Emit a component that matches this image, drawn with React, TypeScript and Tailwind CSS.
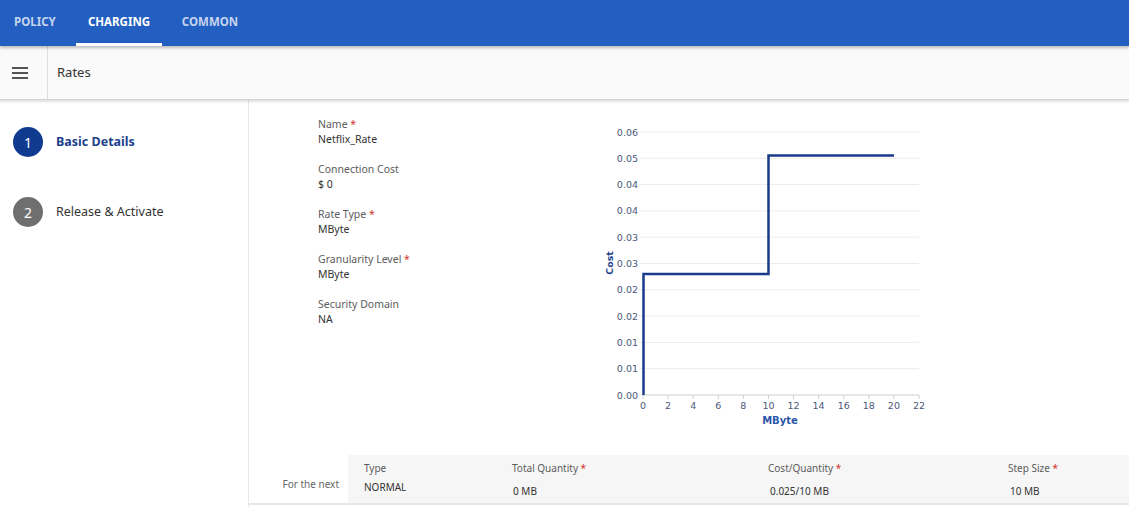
import React from "react";

const yLabels = ["0.06", "0.05", "0.04", "0.04", "0.03", "0.03", "0.02", "0.02", "0.01", "0.01", "0.00"];
const xLabels = ["0", "2", "4", "6", "8", "10", "12", "14", "16", "18", "20", "22"];

function Chart() {
  const x0 = 53;
  const x1 = 329;
  const yTop = 12;
  const yBot = 275;
  const dy = (yBot - yTop) / 10;
  const dx = (x1 - x0) / 11;
  return (
    <svg width="340" height="310" viewBox="0 0 340 310" className="block">
      {yLabels.map((l, i) => {
        const y = yTop + i * dy;
        return (
          <g key={"y" + i}>
            <line x1={x0 - 4} x2={x1} y1={y} y2={y} stroke="#ececec" strokeWidth="1" />
            <text x={48} y={y + 3.5} textAnchor="end" fontSize="9.5" fill="#4a587a" fontFamily="'DejaVu Sans', Verdana, sans-serif">
              {l}
            </text>
          </g>
        );
      })}
      <line x1={x0} x2={x1} y1={yBot} y2={yBot} stroke="#d9d9d9" strokeWidth="1" />
      {xLabels.map((l, i) => {
        const x = x0 + i * dx;
        return (
          <g key={"x" + i}>
            <line x1={x} x2={x} y1={yBot} y2={yBot + 4} stroke="#cfcfcf" strokeWidth="1" />
            <text x={x} y={289} textAnchor="middle" fontSize="9.5" fill="#4a587a" fontFamily="'DejaVu Sans', Verdana, sans-serif">
              {l}
            </text>
          </g>
        );
      })}
      <text x={190} y={304} textAnchor="middle" fontSize="10" fill="#2b55a8" fontWeight="bold" fontFamily="'DejaVu Sans', Verdana, sans-serif">
        MByte
      </text>
      <text
        x={0}
        y={0}
        transform="translate(23 143) rotate(-90)"
        textAnchor="middle"
        fontSize="9.5"
        fill="#1e3f8f"
        fontWeight="bold"
        fontFamily="'DejaVu Sans', Verdana, sans-serif"
      >
        Cost
      </text>
      <path d="M 53.5 275 V 154 H 178.5 V 35.5 H 304" fill="none" stroke="#1a3b8c" strokeWidth="2.5" />
    </svg>
  );
}

function Field({ label, value, req }: { label: string; value: string; req?: boolean }) {
  return (
    <div className="flex flex-col">
      <div className="text-[10.5px] leading-[15px] text-[#5c5c5c]">
        {label}
        {req && <span className="text-[#d0342c]"> *</span>}
      </div>
      <div className="text-[10.5px] leading-[15px] text-[#333]">{value}</div>
    </div>
  );
}

export default function App() {
  return (
    <div
      className="w-[1129px] h-[507px] overflow-hidden bg-white flex flex-col"
      style={{ fontFamily: "'Noto Sans', 'Open Sans', sans-serif" }}
    >
      <div className="h-[46px] bg-[#225fc0] flex items-stretch shrink-0 relative z-20 shadow-[0_2px_3px_rgba(0,0,0,0.25)]">
        <div className="w-[76px] flex items-center pl-[14px] text-[11.5px] font-bold text-[#c6d4ef] pb-[2px]">POLICY</div>
        <div className="w-[86px] flex items-center justify-center text-[11.5px] font-bold text-white border-b-[3px] border-white pt-[1px]">
          CHARGING
        </div>
        <div className="w-[96px] flex items-center justify-center text-[11.5px] font-bold text-[#c6d4ef] pb-[2px]">COMMON</div>
      </div>
      <div className="h-[54px] bg-[#fafafa] flex items-stretch shrink-0 relative z-10 border-b border-[#d4d4d4] shadow-[0_2px_2px_rgba(0,0,0,0.12)]">
        <div className="w-[48px] border-r border-[#dedede] flex items-center pl-[12px]">
          <svg width="16" height="12" viewBox="0 0 16 12">
            <rect x="0" y="0" width="16" height="2" fill="#555" />
            <rect x="0" y="5" width="16" height="2" fill="#555" />
            <rect x="0" y="10" width="16" height="2" fill="#555" />
          </svg>
        </div>
        <div className="flex items-center pl-[9px] text-[13px] text-[#333]">Rates</div>
      </div>
      <div className="flex flex-1 min-h-0">
        <div className="w-[249px] shrink-0 border-r border-[#e8e8e8] pt-[27px] pl-[13px] flex flex-col gap-[40px]">
          <div className="flex items-center gap-[13px]">
            <div className="w-[30px] h-[30px] rounded-full bg-[#0f3a8e] text-white text-[14px] flex items-center justify-center">1</div>
            <div className="text-[12.5px] font-bold text-[#1d3f8c]">Basic Details</div>
          </div>
          <div className="flex items-center gap-[13px]">
            <div className="w-[30px] h-[30px] rounded-full bg-[#6f6f6f] text-white text-[14px] flex items-center justify-center">2</div>
            <div className="text-[12.5px] text-[#333]">Release &amp; Activate</div>
          </div>
        </div>
        <div className="flex-1 flex flex-col">
          <div className="flex h-[355px]">
            <div className="w-[341px] pl-[69px] pt-[17px] flex flex-col gap-[15px]">
              <Field label="Name" value="Netflix_Rate" req />
              <Field label="Connection Cost" value="$ 0" />
              <Field label="Rate Type" value="MByte" req />
              <Field label="Granularity Level" value="MByte" req />
              <Field label="Security Domain" value="NA" />
            </div>
            <div className="pt-[20px]">
              <Chart />
            </div>
          </div>
          <div className="flex h-[50px] border-b-2 border-[#e6e6e6]">
            <div className="w-[99px] flex items-end justify-end pr-[9px] pb-[11px] text-[10px] text-[#666]">For the next</div>
            <div className="flex-1 bg-[#f6f6f6] grid grid-cols-[148px_256px_240px_1fr] pl-[16px] pt-[6px] text-[10px]">
              <div className="flex flex-col">
                <div className="text-[#5c5c5c] leading-[14px]">Type</div>
                <div className="text-[#333] leading-[14px] mt-[5px]">NORMAL</div>
              </div>
              <div className="flex flex-col">
                <div className="text-[#5c5c5c] leading-[14px]">
                  Total Quantity<span className="text-[#d0342c]"> *</span>
                </div>
                <div className="text-[#333] leading-[14px] mt-[9px] pl-[1px]">0 MB</div>
              </div>
              <div className="flex flex-col">
                <div className="text-[#5c5c5c] leading-[14px]">
                  Cost/Quantity<span className="text-[#d0342c]"> *</span>
                </div>
                <div className="text-[#333] leading-[14px] mt-[9px] pl-[2px]">0.025/10 MB</div>
              </div>
              <div className="flex flex-col">
                <div className="text-[#5c5c5c] leading-[14px]">
                  Step Size<span className="text-[#d0342c]"> *</span>
                </div>
                <div className="text-[#333] leading-[14px] mt-[9px] pl-[2px]">10 MB</div>
              </div>
            </div>
          </div>
        </div>
      </div>
    </div>
  );
}
